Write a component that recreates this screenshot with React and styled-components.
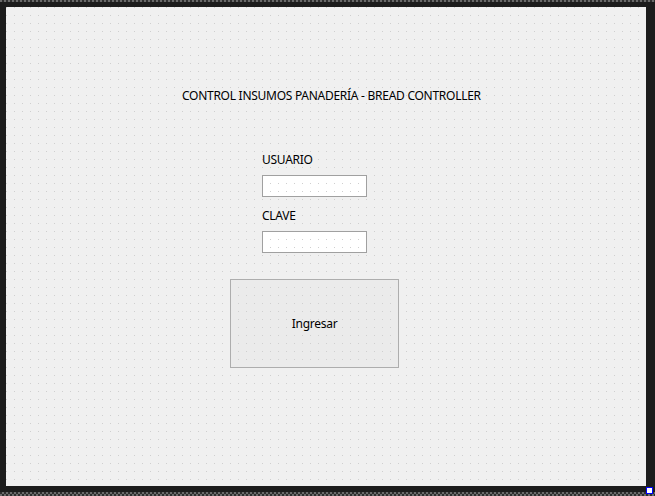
import styled, { createGlobalStyle } from "styled-components";

const GlobalStyle = createGlobalStyle`
html, body {
    margin: 0;
    padding: 0;
    background: #1c1c1c;
    overflow: hidden;
}
* {
    box-sizing: border-box;
}
`;

// designer grid: one 1px dot every 8px, pinned to the viewport
const dots = (bg) => `
    background-color: #cfcfcf;
    background-image:
        linear-gradient(90deg, transparent 1px, ${bg} 1px),
        linear-gradient(180deg, transparent 1px, ${bg} 1px);
    background-size: 8px 8px;
    background-position: 6px 7px;
    background-attachment: fixed;
`;

export default function App() {
    return (
        <>
            <GlobalStyle />
            <Window>
                <Canvas>
                    <Title>CONTROL INSUMOS PANADERÍA - BREAD CONTROLLER</Title>
                    <Form>
                        <Label>USUARIO</Label>
                        <Field type="text" />
                        <Label $gap={11}>CLAVE</Label>
                        <Field type="password" />
                    </Form>
                    <LoginButton>Ingresar</LoginButton>
                </Canvas>
                <Handle />
            </Window>
        </>
    );
}

const Window = styled.div`
position: relative;
width: 655px;
height: 496px;
padding: 7px 9px 10px 6px;
background-color: #1c1c1c;
background-image:
    repeating-linear-gradient(90deg, #6a6a6a 0 2px, #2e2e2e 2px 4px),
    repeating-linear-gradient(90deg, #2e2e2e 0 2px, #6a6a6a 2px 4px),
    repeating-linear-gradient(90deg, #6a6a6a 0 2px, #2e2e2e 2px 4px);
background-size: 100% 2px, 100% 2px, 100% 2px;
background-position: 0 0, 0 492px, 0 494px;
background-repeat: no-repeat;
font-family: "Noto Sans", "Open Sans", sans-serif;
font-size: 12px;
letter-spacing: -0.27px;
color: #000;
`;

const Canvas = styled.div`
width: 640px;
height: 479px;
${dots("#f0f0f0")}
display: flex;
flex-direction: column;
padding-top: 81px;
`;

const Title = styled.div`
line-height: 16px;
padding-left: 176px;
white-space: nowrap;
`;

const Form = styled.div`
display: flex;
flex-direction: column;
align-items: flex-start;
margin-left: 256px;
margin-top: 48px;
`;

const Label = styled.div`
line-height: 16px;
margin-top: ${(p) => p.$gap || 0}px;
margin-bottom: 7px;
`;

const Field = styled.input`
width: 105px;
height: 22px;
margin: 0;
padding: 0 3px;
border: 1px solid #a0a0a0;
${dots("#ffffff")}
font: inherit;
outline: none;
`;

const LoginButton = styled.button`
width: 169px;
height: 89px;
margin: 26px 0 0 224px;
padding: 0;
border: 1px solid #adadad;
${dots("#ebebeb")}
font: inherit;
letter-spacing: inherit;
color: #000;
display: flex;
align-items: center;
justify-content: center;
`;

const Handle = styled.div`
position: absolute;
left: 646px;
top: 487px;
width: 7px;
height: 7px;
background: #fff;
border: 1px solid #0000ff;
`;
